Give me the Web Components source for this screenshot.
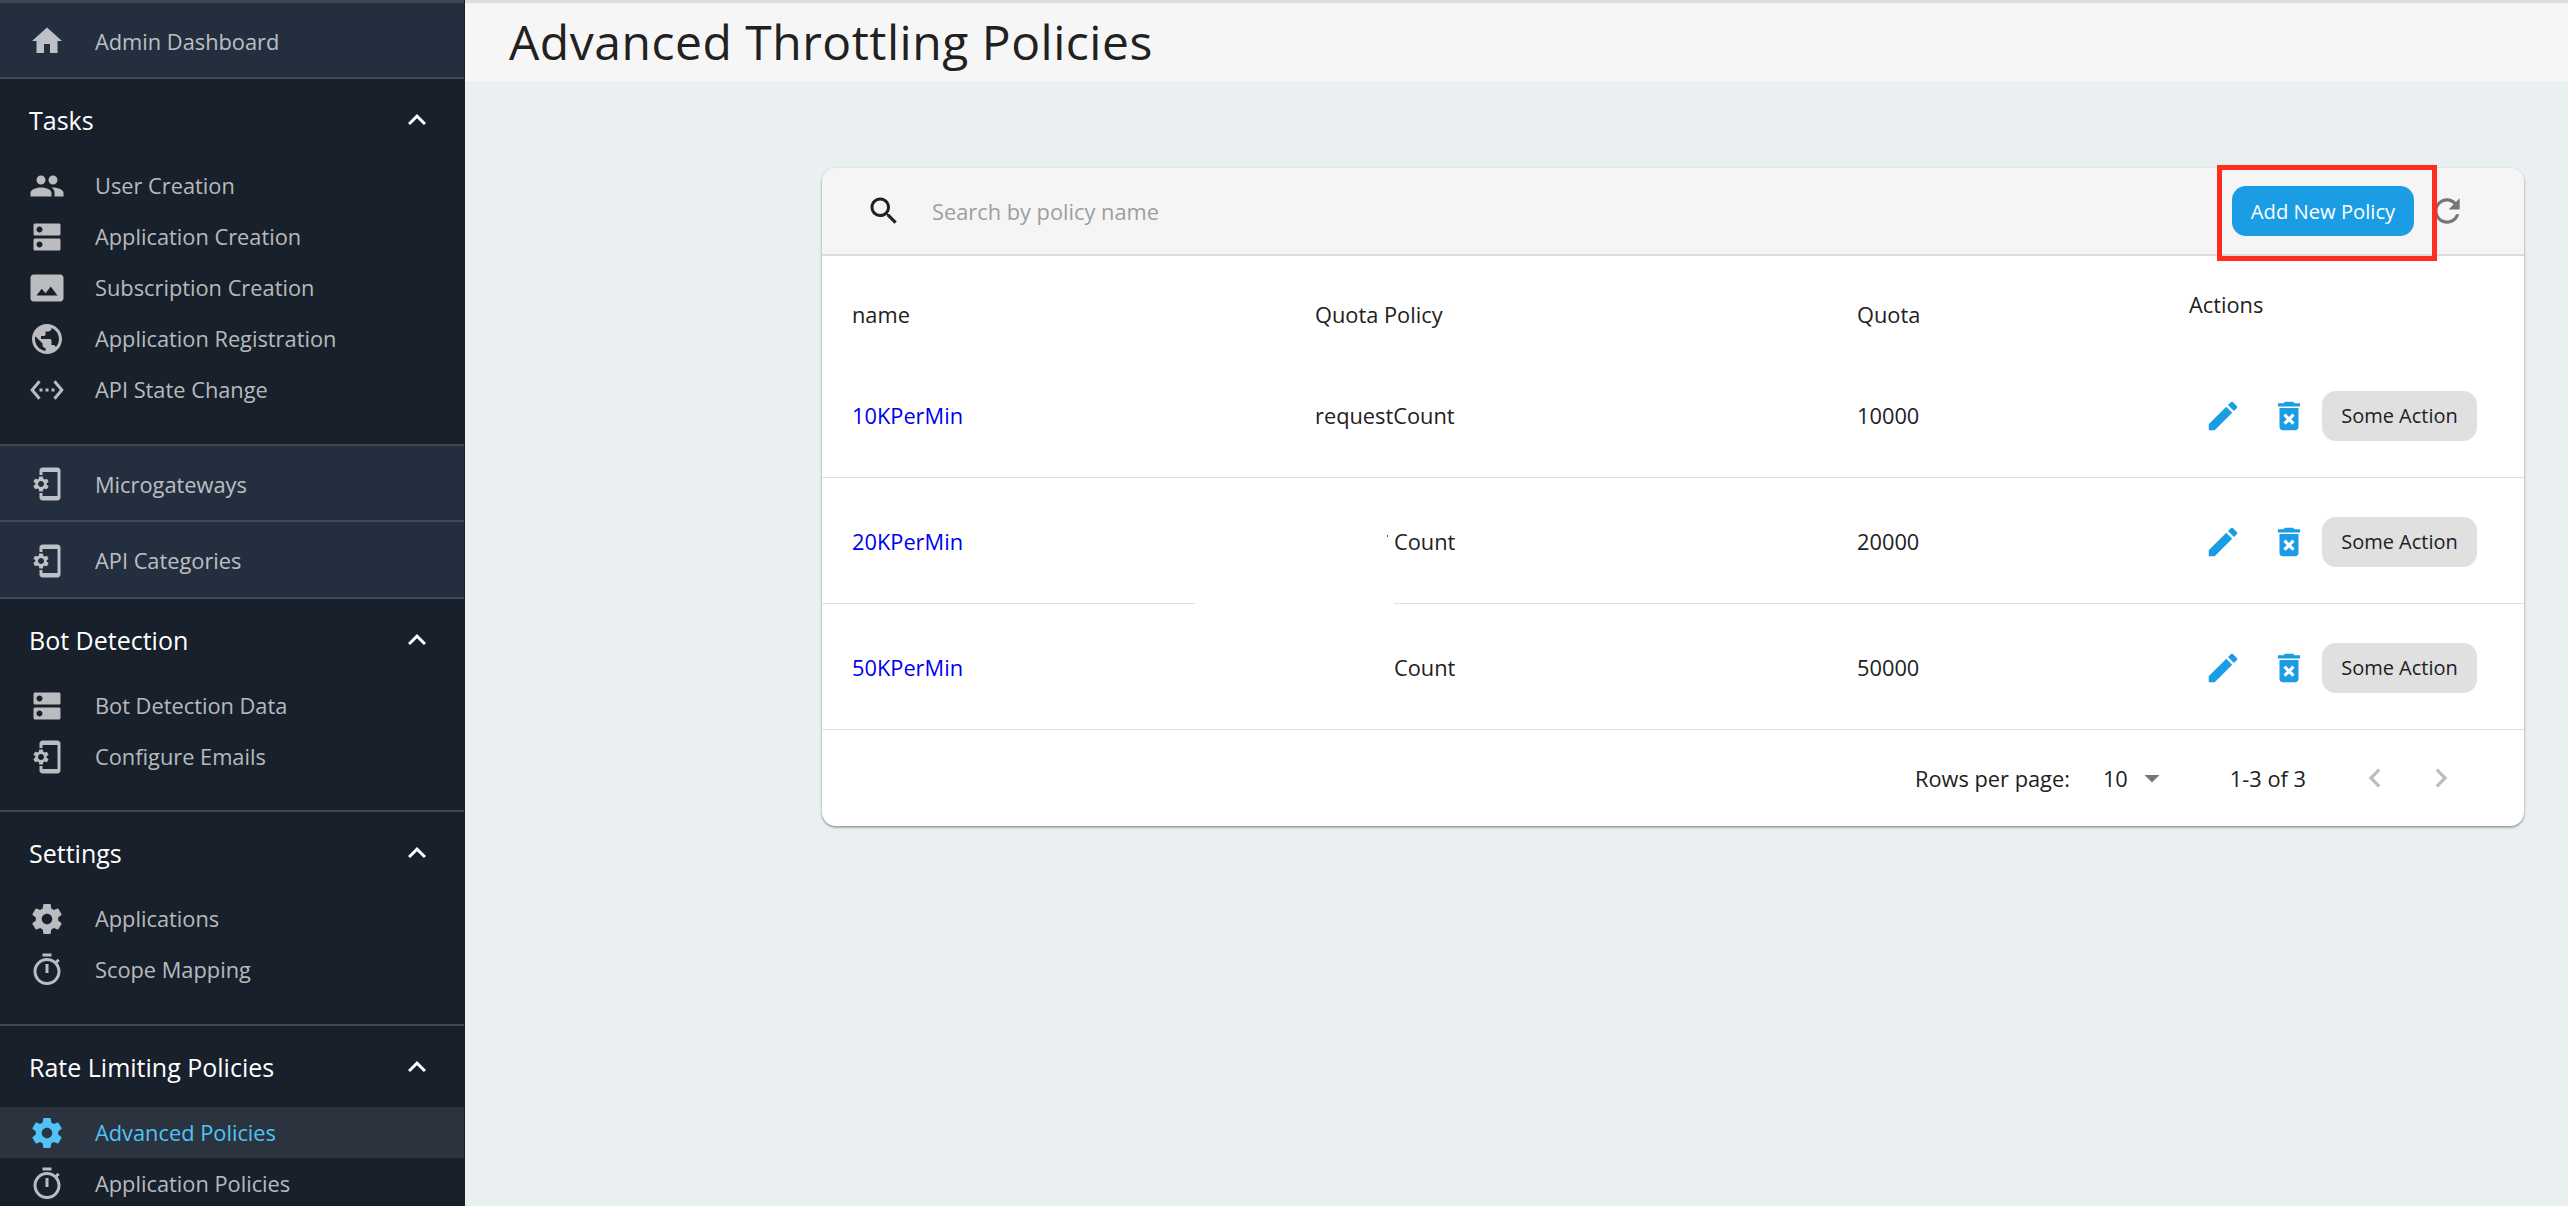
<!DOCTYPE html>
<html lang="en"><head><meta charset="utf-8"><title>Advanced Throttling Policies</title>
<style>
html,body{margin:0;height:100%;overflow:hidden;background:#eaeff1}
body{font-family:"Open Sans",sans-serif}
admin-shell{height:1206px}
</style></head><body>
<admin-shell>
  <side-nav slot="nav">
    <nav-link kind="top" icon="home" style="height:72px">Admin Dashboard</nav-link>
    <nav-group title="Tasks" style="height:367px">
      <nav-link icon="people">User Creation</nav-link>
      <nav-link icon="dns">Application Creation</nav-link>
      <nav-link icon="photo">Subscription Creation</nav-link>
      <nav-link icon="public">Application Registration</nav-link>
      <nav-link icon="code">API State Change</nav-link>
    </nav-group>
    <nav-link kind="top" icon="setup" style="height:72px">Microgateways</nav-link>
    <nav-link kind="top" icon="setup" style="height:73px">API Categories</nav-link>
    <nav-group title="Bot Detection" style="height:213px">
      <nav-link icon="dns">Bot Detection Data</nav-link>
      <nav-link icon="setup">Configure Emails</nav-link>
    </nav-group>
    <nav-group title="Settings" style="height:214px">
      <nav-link icon="gear">Applications</nav-link>
      <nav-link icon="timer">Scope Mapping</nav-link>
    </nav-group>
    <nav-group title="Rate Limiting Policies">
      <nav-link icon="gear" active>Advanced Policies</nav-link>
      <nav-link icon="timer">Application Policies</nav-link>
    </nav-group>
  </side-nav>
  <page-header>Advanced Throttling Policies</page-header>
  <policy-card>
    <policy-row slot="rows" name="10KPerMin" policy="requestCount" quota="10000"></policy-row>
    <policy-row slot="rows" name="20KPerMin" policy="Count" quota="20000" tick inset></policy-row>
    <policy-row slot="rows" name="50KPerMin" policy="Count" quota="50000" inset></policy-row>
  </policy-card>
</admin-shell>
<script>
const P={
home:'M10 20v-6h4v6h5v-8h3L12 3 2 12h3v8z',
people:'M16 11c1.66 0 2.99-1.34 2.99-3S17.66 5 16 5c-1.66 0-3 1.34-3 3s1.34 3 3 3zm-8 0c1.66 0 2.99-1.34 2.99-3S9.66 5 8 5C6.34 5 5 6.34 5 8s1.34 3 3 3zm0 2c-2.33 0-7 1.17-7 3.5V19h14v-2.5c0-2.33-4.67-3.5-7-3.5zm8 0c-.29 0-.62.02-.97.05 1.16.84 1.97 1.97 1.97 3.45V19h6v-2.5c0-2.33-4.67-3.5-7-3.5z',
dns:'M20 13H4c-.55 0-1 .45-1 1v6c0 .55.45 1 1 1h16c.55 0 1-.45 1-1v-6c0-.55-.45-1-1-1zM7 19c-1.1 0-2-.9-2-2s.9-2 2-2 2 .9 2 2-.9 2-2 2zM20 3H4c-.55 0-1 .45-1 1v6c0 .55.45 1 1 1h16c.55 0 1-.45 1-1V4c0-.55-.45-1-1-1zM7 9c-1.1 0-2-.9-2-2s.9-2 2-2 2 .9 2 2-.9 2-2 2z',
photo:'M21 3H3C2 3 1 4 1 5v14c0 1.1.9 2 2 2h18c1 0 2-1 2-2V5c0-1-1-2-2-2zM5 17l3.5-4.5 2.5 3.01L14.5 11l4.5 6H5z',
public:'M12 2C6.48 2 2 6.48 2 12s4.48 10 10 10 10-4.48 10-10S17.52 2 12 2zm-1 17.93c-3.95-.49-7-3.85-7-7.93 0-.62.08-1.21.21-1.79L9 15v1c0 1.1.9 2 2 2v1.93zm6.9-2.54c-.26-.81-1-1.39-1.9-1.39h-1v-3c0-.55-.45-1-1-1H8v-2h2c.55 0 1-.45 1-1V7h2c1.1 0 2-.9 2-2v-.41c2.93 1.19 5 4.06 5 7.41 0 2.08-.8 3.97-2.1 5.39z',
code:'M7.77 6.76L6.23 5.48.82 12l5.41 6.52 1.54-1.28L3.42 12l4.35-5.24zM7 13h2v-2H7v2zm10-2h-2v2h2v-2zm-6 2h2v-2h-2v2zm6.77-7.52l-1.54 1.28L20.58 12l-4.35 5.24 1.54 1.28L23.18 12l-5.41-6.52z',
setup:'M11.8 12.5v-1l1.1-.8c.1-.1.1-.2.1-.3l-1-1.7c-.1-.1-.2-.2-.3-.1l-1.3.4c-.3-.2-.6-.4-.9-.5l-.2-1.3c0-.1-.1-.2-.3-.2H7c-.1 0-.2.1-.3.2l-.2 1.3c-.3.1-.6.3-.9.5l-1.3-.5c-.1 0-.2 0-.3.1l-1 1.7c-.1.1 0 .2.1.3l1.1.8v1l-1.1.8c-.1.2-.1.3-.1.4l1 1.7c.1.1.2.2.3.1l1.4-.4c.3.2.6.4.9.5l.2 1.3c-.1.1.1.2.2.2h2c.1 0 .2-.1.3-.2l.2-1.3c.3-.1.6-.3.9-.5l1.3.5c.1 0 .2 0 .3-.1l1-1.7c.1-.1 0-.2-.1-.3l-1.1-.9zM8 14c-1.1 0-2-.9-2-2s.9-2 2-2 2 .9 2 2-.9 2-2 2zM19 1H9c-1.1 0-2 .9-2 2v3h2V4h10v16H9v-2H7v3c0 1.1.9 2 2 2h10c1.1 0 2-.9 2-2V3c0-1.1-.9-2-2-2z',
gear:'M19.43 12.98c.04-.32.07-.64.07-.98s-.03-.66-.07-.98l2.11-1.65c.19-.15.24-.42.12-.64l-2-3.46c-.12-.22-.39-.3-.61-.22l-2.49 1c-.52-.4-1.08-.73-1.69-.98l-.38-2.65C14.46 2.18 14.25 2 14 2h-4c-.25 0-.46.18-.49.42l-.38 2.65c-.61.25-1.17.59-1.69.98l-2.49-1c-.23-.09-.49 0-.61.22l-2 3.46c-.13.22-.07.49.12.64l2.11 1.65c-.04.32-.07.65-.07.98s.03.66.07.98l-2.11 1.65c-.19.15-.24.42-.12.64l2 3.46c.12.22.39.3.61.22l2.49-1c.52.4 1.08.73 1.69.98l.38 2.65c.03.24.24.42.49.42h4c.25 0 .46-.18.49-.42l.38-2.65c.61-.25 1.17-.59 1.69-.98l2.49 1c.23.09.49 0 .61-.22l2-3.46c.12-.22.07-.49-.12-.64l-2.11-1.65zM12 15.5c-1.93 0-3.5-1.57-3.5-3.5s1.57-3.5 3.5-3.5 3.5 1.57 3.5 3.5-1.57 3.5-3.5 3.5z',
timer:'M15 1H9v2h6V1zm-4 13h2V8h-2v6zm8.03-6.61l1.42-1.42c-.43-.51-.9-.99-1.41-1.41l-1.42 1.42C16.07 4.74 14.12 4 12 4c-4.97 0-9 4.03-9 9s4.02 9 9 9 9-4.03 9-9c0-2.12-.74-4.07-1.97-5.61zM12 20c-3.87 0-7-3.13-7-7s3.13-7 7-7 7 3.13 7 7-3.13 7-7 7z',
less:'M12 8l-6 6 1.41 1.41L12 10.83l4.59 4.58L18 14z',
search:'M15.5 14h-.79l-.28-.27C15.41 12.59 16 11.11 16 9.5 16 5.91 13.09 3 9.5 3S3 5.91 3 9.5 5.91 16 9.5 16c1.61 0 3.09-.59 4.23-1.57l.27.28v.79l5 4.99L20.49 19l-4.99-5zm-6 0C7.01 14 5 11.99 5 9.5S7.01 5 9.5 5 14 7.01 14 9.5 11.99 14 9.5 14z',
refresh:'M17.65 6.35C16.2 4.9 14.21 4 12 4c-4.42 0-7.99 3.58-7.99 8s3.57 8 7.99 8c3.73 0 6.84-2.55 7.73-6h-2.08c-.82 2.33-3.04 4-5.65 4-3.31 0-6-2.69-6-6s2.69-6 6-6c1.66 0 3.14.69 4.22 1.78L13 11h7V4l-2.35 2.35z',
edit:'M3 17.25V21h3.75L17.81 9.94l-3.75-3.75L3 17.25zM20.71 7.04c.39-.39.39-1.02 0-1.41l-2.34-2.34c-.39-.39-1.02-.39-1.41 0l-1.83 1.83 3.75 3.75 1.83-1.83z',
trash:'M6 19c0 1.1.9 2 2 2h8c1.1 0 2-.9 2-2V7H6v12zm2.46-7.12l1.41-1.41L12 12.59l2.12-2.12 1.41 1.41L13.41 14l2.12 2.12-1.41 1.41L12 15.41l-2.12 2.12-1.41-1.41L10.59 14l-2.13-2.12zM15.5 4l-1-1h-5l-1 1H5v2h14V4z',
prev:'M15.41 7.41L14 6l-6 6 6 6 1.41-1.41L10.83 12z',
next:'M10 6L8.59 7.41 13.17 12l-4.58 4.59L10 18l6-6z',
drop:'M7 10l5 5 5-5z'};
const svg=(n,s,c='currentColor')=>`<svg width="${s}" height="${s}" viewBox="0 0 24 24" fill="${c}" style="display:block;flex:none" aria-hidden="true"><path d="${P[n]}"/></svg>`;
class Base extends HTMLElement{
  render(html){if(!this.shadowRoot)this.attachShadow({mode:'open'});this.shadowRoot.innerHTML=html;}
  connectedCallback(){this.draw();}
}
customElements.define('admin-shell',class extends Base{draw(){this.render(`<style>
:host{display:grid;grid-template-columns:465px 1fr;grid-template-rows:81px 1fr;overflow:hidden;color:#212121}
.nav{grid-row:1/3;min-height:0;overflow:hidden;display:block}
</style><slot class="nav" name="nav"></slot><slot></slot>`);}});
customElements.define('side-nav',class extends Base{draw(){this.render(`<style>
:host{display:flex;flex-direction:column;height:100%;background:#18202c;box-sizing:border-box;overflow:hidden}
.top{height:3px;background:#404854;flex:none;margin-right:1px}
::slotted(*){flex:none}
</style><div class="top"></div><slot></slot>`);}});
customElements.define('nav-link',class extends Base{draw(){
 const top=this.getAttribute('kind')==='top',active=this.hasAttribute('active');
 this.render(`<style>
:host{display:flex;align-items:center;box-sizing:content-box;height:51px;padding-left:29px;font-size:21.8px;
 color:${active?'#4fc3f7':'rgba(255,255,255,.7)'};background:${top?'#232f3e':active?'#2b333f':'transparent'};margin-right:1px;
 ${top?'padding-top:2px;border-bottom:2px solid #404854;':''}}
.t{margin-left:30px;white-space:nowrap}
</style>${svg(this.getAttribute('icon'),36)}<span class="t"><slot></slot></span>`);}});
customElements.define('nav-group',class extends Base{draw(){
 this.render(`<style>
:host{display:flex;flex-direction:column;box-sizing:content-box}
.h{display:flex;align-items:center;justify-content:space-between;height:81px;padding:0 29px;margin-right:1px;color:#fff;font-size:25px;flex:none}
.b{flex:1}
.rule{height:2px;background:#404854;flex:none;margin-right:1px}
</style><div class="h"><span>${this.getAttribute('title')}</span>${svg('less',36)}</div><div class="b"><slot></slot></div>${this.nextElementSibling?'<div class="rule"></div>':''}`);}});
customElements.define('page-header',class extends Base{draw(){this.render(`<style>
:host{display:flex;align-items:center;box-sizing:border-box;height:81px;padding:0 0 2px 44px;background:#f6f6f6;border-top:3px solid #ddd;font-size:48px;font-weight:400;letter-spacing:.52px;color:#212121;white-space:nowrap}
</style><slot></slot>`);}});
customElements.define('policy-card',class extends Base{draw(){this.render(`<style>
:host{display:block;position:relative;box-sizing:border-box;width:1702px;height:658px;margin:87px 0 0 357px;background:#fff;border-radius:14px;box-shadow:0 1px 3px rgba(0,0,0,.3),0 2px 2px rgba(0,0,0,.14);font-size:21.8px;color:#212121}
.bar{display:flex;align-items:center;background:#f5f5f5;border-bottom:2px solid #dcdcdc;border-radius:14px 14px 0 0;height:86px;padding-left:44px}
.ph{margin-left:30px;color:#9e9e9e;flex:1}
.add{display:flex;align-items:center;justify-content:center;width:182px;height:50px;background:#1b9de6;color:#fff;border-radius:14px;font-size:20.2px}
.refresh{margin:0 58px 0 14px;color:#757575}
.mark{position:absolute;left:1395px;top:-3px;width:220px;height:96px;border:5px solid #ff2d1e;box-sizing:border-box}
.head{display:grid;grid-template-columns:463px 542px 332px 1fr;box-sizing:border-box;height:96px;padding:20px 0 0 30px;align-items:center}
.head span:last-child{margin-bottom:20px}
.foot{display:flex;align-items:center;height:96px}
.patch{position:absolute;left:373px;top:432px;width:199px;height:8px;background:#fff}
.rows{display:block}
.rpp{margin-left:1093px}
.sel{margin-left:33px;display:flex;align-items:center}
.sel svg{margin-left:6px;color:#757575}
.range{margin-left:60px}
.pg{color:#bdbdbd}
</style>
<div class="bar">${svg('search',36,'#212121')}<span class="ph">Search by policy name</span><span class="add">Add New Policy</span><span class="refresh">${svg('refresh',38)}</span></div>
<div class="head"><span>name</span><span>Quota Policy</span><span>Quota</span><span>Actions</span></div>
<div class="rows"><slot name="rows"></slot></div>
<div class="patch"></div>
<div class="foot"><span class="rpp">Rows per page:</span><span class="sel">10${svg('drop',36)}</span><span class="range">1-3 of 3</span><span class="pg" style="margin-left:50px">${svg('prev',38)}</span><span class="pg" style="margin-left:28px">${svg('next',38)}</span></div>
<div class="mark"></div>`);}});
customElements.define('policy-row',class extends Base{draw(){
 const g=n=>this.getAttribute(n);
 this.render(`<style>
:host{display:grid;grid-template-columns:463px 542px 332px 1fr;align-items:center;height:123px;padding:2px 0 0 30px;border-bottom:1px solid #e0e0e0;box-sizing:content-box}
a{color:#0000ee;text-decoration:none}
.acts{display:flex;align-items:center;margin-left:15px}
.btn{display:flex;align-items:center;justify-content:center;width:155px;height:50px;background:#e0e0e0;border-radius:14px;margin-left:14px;color:#212121;font-size:20px}
.e,.d{color:#1b9de6}
.d{margin-left:28px}
.ins{padding-left:${this.hasAttribute('inset')?79:0}px;position:relative}
.tick{position:absolute;left:72px;top:8px;width:1px;height:2px;background:#555}
</style><a href="#">${g('name')}</a><span class="ins">${this.hasAttribute('tick')?'<i class="tick"></i>':''}${g('policy')}</span><span>${g('quota')}</span>
<span class="acts"><span class="e">${svg('edit',38)}</span><span class="d">${svg('trash',38)}</span><span class="btn">Some Action</span></span>`);}});
</script>
</body></html>
